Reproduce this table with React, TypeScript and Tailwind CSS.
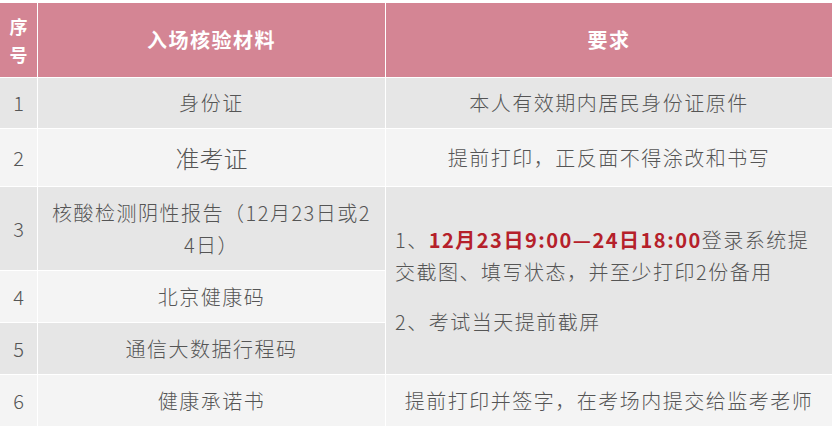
import React from "react"

const cell = "flex items-center justify-center text-center"

export default function App() {
  return (
    <div
      className="min-h-screen w-[835px] bg-white pt-[3px] font-light text-[#555555]"
      style={{ fontFamily: '"Noto Sans CJK SC", "Noto Sans", sans-serif' }}
    >
      <div className="grid w-[832px] grid-cols-[37px_347px_446px] grid-rows-[74px_50px_57px_83px_51px_51px_51px] gap-px bg-white text-[20px] leading-[32px] tracking-[1.5px]">
        {/* header */}
        <div className={`${cell} bg-[#d48594] text-[18px] leading-[28px] font-bold text-white tracking-normal`}>
          序<br />号
        </div>
        <div className={`${cell} bg-[#d48594] font-bold text-white`}>入场核验材料</div>
        <div className={`${cell} bg-[#d48594] font-bold text-white`}>要求</div>

        {/* 1 */}
        <div className={`${cell} bg-[#e6e6e6] tracking-normal`}>1</div>
        <div className={`${cell} bg-[#e6e6e6]`}>身份证</div>
        <div className={`${cell} bg-[#e6e6e6]`}>本人有效期内居民身份证原件</div>

        {/* 2 */}
        <div className={`${cell} bg-[#f4f4f4] tracking-normal`}>2</div>
        <div className={`${cell} bg-[#f4f4f4] text-[24px] tracking-normal`}>准考证</div>
        <div className={`${cell} bg-[#f4f4f4]`}>提前打印，正反面不得涂改和书写</div>

        {/* 3 */}
        <div className={`${cell} bg-[#e6e6e6] tracking-normal`}>3</div>
        <div className={`${cell} bg-[#e6e6e6]`}>
          <span>
            核酸检测阴性报告（12月23日或2
            <br />
            4日）
          </span>
        </div>
        <div className="row-span-3 flex flex-col justify-center bg-[#e6e6e6] pl-[9px] text-left">
          <p>
            1、
            <span className="font-bold text-[#b5202a]">12月23日9:00—24日18:00</span>
            登录系统提
            <br />
            交截图、填写状态，并至少打印2份备用
          </p>
          <p className="mt-[18px]">2、考试当天提前截屏</p>
        </div>

        {/* 4 */}
        <div className={`${cell} bg-[#f4f4f4] tracking-normal`}>4</div>
        <div className={`${cell} bg-[#f4f4f4]`}>北京健康码</div>

        {/* 5 */}
        <div className={`${cell} bg-[#e6e6e6] tracking-normal`}>5</div>
        <div className={`${cell} bg-[#e6e6e6]`}>通信大数据行程码</div>

        {/* 6 */}
        <div className={`${cell} bg-[#f4f4f4] tracking-normal`}>6</div>
        <div className={`${cell} bg-[#f4f4f4]`}>健康承诺书</div>
        <div className={`${cell} bg-[#f4f4f4]`}>提前打印并签字，在考场内提交给监考老师</div>
      </div>
    </div>
  )
}
